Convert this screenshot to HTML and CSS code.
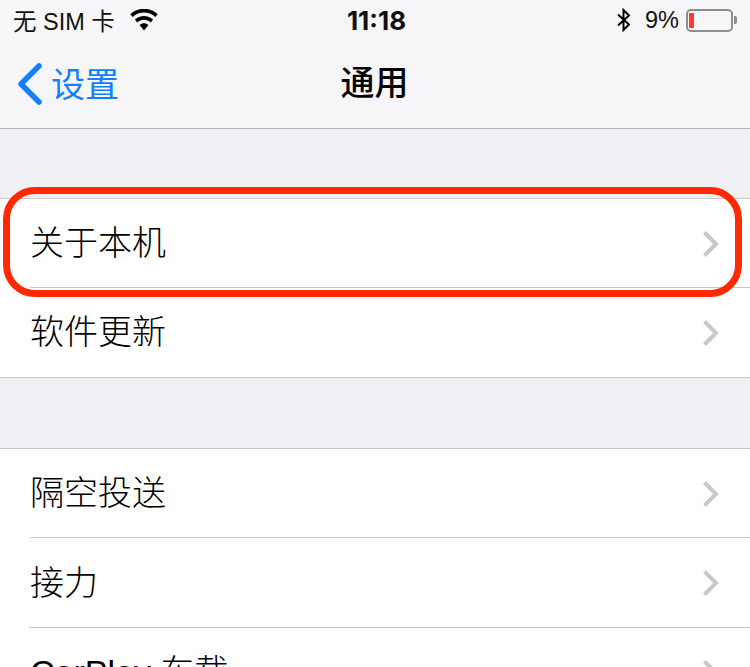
FILE: index.html
```html
<!DOCTYPE html>
<html lang="zh">
<head>
<meta charset="utf-8">
<title>通用</title>
<link rel="stylesheet" href="styles.css">
</head>
<body>
<div class="screen">
  <header class="topbar">
    <div class="status">
      <div class="status-left">
        <span>无 SIM 卡</span>
        <svg class="wifi" width="30" height="22" viewBox="0 0 30 20" preserveAspectRatio="none"><path d="M15 19.5 10.6 14.6C13.2 12.5 16.8 12.5 19.4 14.6Z" fill="#000"/><path d="M8.2 12.2 5.9 9.6C11.1 5.3 18.9 5.3 24.1 9.6L21.8 12.2C17.8 9 12.2 9 8.2 12.2Z" fill="#000"/><path d="M3.6 7.2 1.3 4.7C9.2-1.9 20.8-1.9 28.7 4.7L26.4 7.2C19.8 1.8 10.2 1.8 3.6 7.2Z" fill="#000"/></svg>
      </div>
      <div class="clock">11:18</div>
      <div class="status-right">
        <svg class="bt" width="18" height="24" viewBox="0 0 18 24"><path d="M3 6.5 14 16.5 8.5 22V2L14 7.5 3 17.5" fill="none" stroke="#000" stroke-width="2"/></svg>
        <span class="pct">9%</span>
        <div class="battery"><div class="battery-body"><div class="battery-level"></div></div><div class="battery-tip"></div></div>
      </div>
    </div>
    <nav class="navbar">
      <div class="back">
        <svg width="28" height="44" viewBox="0 0 28 44"><path d="M24 4 6 22 24 40" fill="none" stroke="#147efb" stroke-width="5.5" stroke-linecap="round" stroke-linejoin="round"/></svg>
        <span>设置</span>
      </div>
      <h1 class="title">通用</h1>
    </nav>
  </header>

  <section class="group first">
    <div class="row"><span>关于本机</span><svg class="chev" width="18" height="28" viewBox="0 0 18 28"><path d="M2.5 2.5 14 14 2.5 25.500" fill="none" stroke="#c7c7cc" stroke-width="4"/></svg></div>
    <div class="row"><span>软件更新</span><svg class="chev" width="18" height="28" viewBox="0 0 18 28"><path d="M2.5 2.5 14 14 2.5 25.500" fill="none" stroke="#c7c7cc" stroke-width="4"/></svg></div>
  </section>

  <section class="group second">
    <div class="row"><span>隔空投送</span><svg class="chev" width="18" height="28" viewBox="0 0 18 28"><path d="M2.5 2.5 14 14 2.5 25.500" fill="none" stroke="#c7c7cc" stroke-width="4"/></svg></div>
    <div class="row tall"><span>接力</span><svg class="chev" width="18" height="28" viewBox="0 0 18 28"><path d="M2.5 2.5 14 14 2.5 25.500" fill="none" stroke="#c7c7cc" stroke-width="4"/></svg></div>
    <div class="row"><span>CarPlay 车载</span><svg class="chev" width="18" height="28" viewBox="0 0 18 28"><path d="M2.5 2.5 14 14 2.5 25.500" fill="none" stroke="#c7c7cc" stroke-width="4"/></svg></div>
  </section>

  <div class="highlight"></div>
</div>
</body>
</html>
```

FILE: styles.css
```css
* { box-sizing: border-box; }
html, body { margin: 0; padding: 0; }
body {
  font-family: "Liberation Sans", "Noto Sans CJK SC", sans-serif;
  background: #efeff4;
  color: #000;
}
.screen {
  position: relative;
  width: 750px;
  height: 667px;
  overflow: hidden;
  background: #efeff4;
}
.topbar {
  height: 129px;
  background: #f6f6f8;
  border-bottom: 1px solid #b2b2b2;
}
.status {
  height: 40px;
  display: grid;
  grid-template-columns: 1fr auto 1fr;
  align-items: center;
  padding: 0 13px 0 13px;
  font-size: 23.500px;
  color: #111;
}
.status-left { display: flex; align-items: center; gap: 14px; }
.status-right { display: flex; align-items: center; justify-content: flex-end; }
.wifi { margin-top: -1px; }
.clock { font-size: 26px; font-weight: 700; font-family: "Inter", "Liberation Sans", sans-serif; margin-left: 3px; margin-top: 1px; }
.bt { margin-right: 12px; }
.pct { margin-right: 7px; font-size: 23.500px; }
.battery { display: flex; align-items: center; }
.battery-body {
  width: 47px;
  height: 23px;
  border: 2px solid #8e8e8e;
  border-radius: 5px;
  padding: 2px 1px;
}
.battery-level { width: 5px; height: 100%; background: #ff3b30; border-radius: 1px; }
.battery-tip { width: 3px; height: 8px; background: #8e8e8e; border-radius: 0 2px 2px 0; margin-left: 1px; }
.navbar {
  height: 88px;
  display: grid;
  grid-template-columns: 1fr auto 1fr;
  align-items: center;
  padding: 0 17px 0 16px;
}
.back {
  display: flex;
  align-items: center;
  gap: 8px;
  color: #147efb;
  font-size: 34px;
  margin-top: -4px;
}
.back svg { margin-top: 3px; margin-left: -1px; width: 28px; height: 44px; }
.title {
  grid-column: 2;
  margin: 0;
  font-size: 34px;
  font-weight: 500;
  line-height: 1;
  margin-top: -2px;
}
.group {
  background: #fff;
  border-top: 1px solid #c8c7cc;
  border-bottom: 1px solid #c8c7cc;
}
.first { margin-top: 69px; }
.second { margin-top: 70px; }
.row {
  position: relative;
  height: 89px;
  padding: 0 30px 0 30px;
  display: flex;
  align-items: center;
  justify-content: space-between;
  font-size: 34px;
  font-weight: 300;
  color: #000;
}
.row.tall { height: 90px; }
.row > span { margin-top: -6px; }
.row + .row::before {
  content: "";
  position: absolute;
  left: 30px;
  right: 0;
  top: -1px;
  height: 1px;
  background: #c8c7cc;
}
.chev { flex: none; }
.highlight {
  position: absolute;
  left: 3px;
  top: 187px;
  width: 739px;
  height: 110px;
  border: 7px solid #ff2a00;
  border-radius: 32px;
}
```
